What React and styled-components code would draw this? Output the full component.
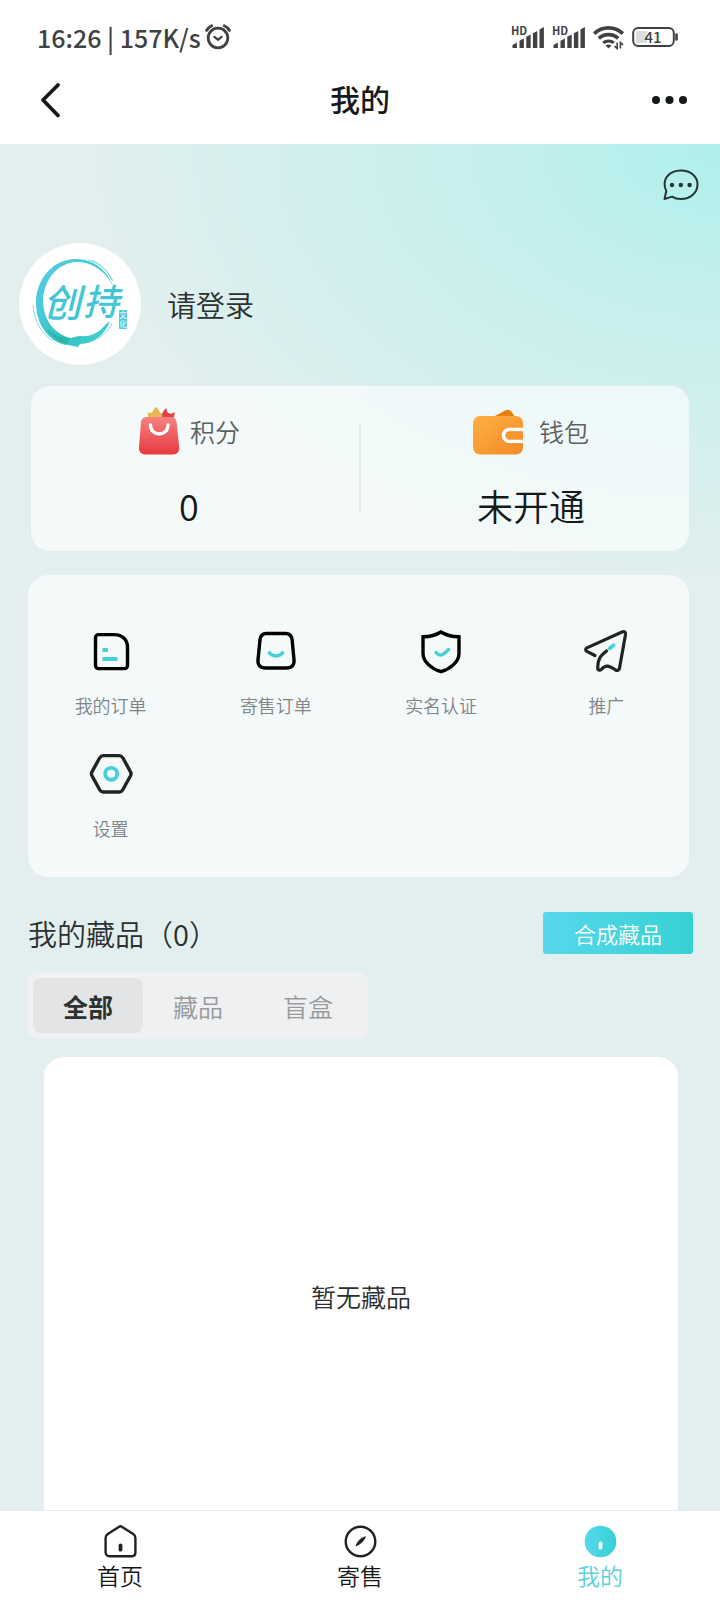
import React from 'react'
import styled, { createGlobalStyle } from 'styled-components'

const color = {
  ink: '#16191a',
  text: '#2b3030',
  status: '#404143',
  label: '#5b6060',
  muted: '#7f8587',
  accent: '#45cfd8',
  page: '#e3efef',
}

const GlobalStyle = createGlobalStyle`
  * {
    box-sizing: border-box;
  }
  body {
    margin: 0;
    font-family: 'Noto Sans CJK SC', sans-serif;
    font-weight: 350;
    color: ${color.text};
  }
  h1, h2, p {
    margin: 0;
    font-weight: inherit;
  }
  a {
    color: inherit;
    text-decoration: none;
  }
  button {
    border: none;
    padding: 0;
    background: none;
    font: inherit;
    color: inherit;
    cursor: pointer;
  }
  svg {
    display: block;
    flex: none;
    overflow: visible;
  }
`

const Screen = styled.div`
  display: flex;
  flex-direction: column;
  height: 100vh;
  background: #fff;
`

const StatusBar = styled.div`
  display: flex;
  align-items: center;
  justify-content: space-between;
  height: 56px;
  padding: 18px 42px 0 37px;
  color: ${color.status};
  font-size: 25px;
  font-weight: 500;
  line-height: 36px;
`

const StatusGroup = styled.div`
  display: flex;
  align-items: center;
  gap: ${(p) => p.$gap}px;
`

const TitleBar = styled.header`
  display: grid;
  grid-template-columns: 60px 1fr 60px;
  align-items: center;
  height: 88px;
  padding: 0 20px;
`

const BarButton = styled.button`
  display: flex;
  justify-content: center;
  padding: 16px 0;
`

const Title = styled.h1`
  padding-bottom: 5px;
  color: ${color.ink};
  font-size: 30px;
  font-weight: 500;
  line-height: 40px;
  text-align: center;
`

const Content = styled.main`
  flex: 1;
  min-height: 0;
  overflow-y: auto;
  scrollbar-width: none;
  background: radial-gradient(ellipse 650px 450px at 100% 0, #b0f0ec, #c6efed 38%, ${color.page}) no-repeat ${color.page};
`

const TopActions = styled.div`
  display: flex;
  justify-content: flex-end;
  padding: 24px 21px 0;
`

const Profile = styled.a`
  display: flex;
  align-items: center;
  gap: 26px;
  margin: 41px 19px 0;
  font-size: 29px;
`

const Avatar = styled.span`
  width: 122px;
  height: 122px;
  border-radius: 50%;
  background: #fff;
`

const Assets = styled.section`
  display: flex;
  align-items: center;
  height: 167px;
  margin: 20px 30px 0;
  border: 1px solid #e5ecec;
  border-radius: 20px;
  background: rgba(255, 255, 255, 0.62);
`

const Asset = styled.a`
  flex: 1;
  display: flex;
  flex-direction: column;
  align-items: center;
  gap: 22px;
  padding: ${(p) => (p.$last ? '0 0 2px 12px' : '0 12px 2px 0')};
`

const AssetHead = styled.span`
  display: flex;
  align-items: center;
  gap: ${(p) => p.$gap}px;
  height: 52px;
  color: ${color.label};
  font-size: 25px;
  line-height: 36px;
`

const AssetValue = styled.span`
  color: ${color.ink};
  font-size: 36px;
  line-height: 52px;
`

const Divider = styled.span`
  width: 2px;
  height: 88px;
  background: #e3e8e8;
`

const Menu = styled.nav`
  display: grid;
  grid-template-columns: repeat(4, 1fr);
  row-gap: 28px;
  margin: 23px 31px 0 28px;
  padding: 52px 0 32px;
  border-radius: 20px;
  background: rgba(255, 255, 255, 0.62);
`

const MenuItem = styled.a`
  display: flex;
  flex-direction: column;
  align-items: center;
  gap: 13px;
  color: ${color.muted};
  font-size: 18px;
  line-height: 34px;
`

const CollectionHead = styled.div`
  display: flex;
  align-items: center;
  justify-content: space-between;
  margin: 35px 27px 0 28px;
`

const CollectionTitle = styled.h2`
  font-size: 29px;
  line-height: 42px;
`

const ComposeButton = styled.button`
  width: 150px;
  height: 42px;
  border-radius: 3px;
  background: linear-gradient(90deg, #57d7ec, #36d2d3);
  color: #fff;
  font-size: 22px;
  line-height: 42px;
`

const Tabs = styled.div`
  display: flex;
  width: fit-content;
  margin: 18px 0 0 28px;
  padding: 6px 5px;
  border-radius: 10px;
  background: #eff0f2;
`

const Tab = styled.button`
  width: 110px;
  height: 55px;
  border-radius: 8px;
  background: ${(p) => (p.$active ? '#e3e4e6' : 'none')};
  color: ${(p) => (p.$active ? color.text : '#989a9c')};
  font-size: 25px;
  font-weight: ${(p) => (p.$active ? 700 : 350)};
`

const EmptyPanel = styled.section`
  display: flex;
  align-items: center;
  justify-content: center;
  height: 478px;
  margin: 18px 42px 0 44px;
  border-radius: 20px;
  background: #fff;
  font-size: 25px;
`

const TabBar = styled.nav`
  display: grid;
  grid-template-columns: repeat(3, 1fr);
  height: 90px;
  border-top: 1px solid #e6eeee;
  background: #fff;
`

const TabBarItem = styled.a`
  display: flex;
  flex-direction: column;
  align-items: center;
  padding-top: 14px;
  color: ${(p) => (p.$active ? '#5bcfe0' : color.ink)};
  font-size: 23px;
  line-height: 34px;
`

const AlarmIcon = () => (
  <svg width='26' height='26' viewBox='0 0 26 26' fill='none' stroke='currentColor' strokeWidth='2.8' strokeLinecap='round'>
    <circle cx='13' cy='14' r='9.8' />
    <path d='M1.6 6.4c1.4-2 3-3.6 5.2-4.6M24.4 6.4c-1.4-2-3-3.6-5.2-4.6' />
    <path d='M9.4 12.8l3.6 3 3.6-3' strokeWidth='2.2' />
  </svg>
)

const SignalIcon = () => (
  <svg width='33' height='24' viewBox='0 0 33 24' fill='currentColor'>
    <text x='0' y='10' fontSize='11' fontWeight='700'>HD</text>
    <path d='M1.5 20l4.4-2.6v5.6h-4.4zM8.5 15.8l4.4-2.2v9.4h-4.4zM15.3 11.8l4.4-2.2v13.4h-4.4zM21.9 8.3l4.4-2.2v16.9h-4.4zM28.5 4.6l4.4-2.6v21h-4.4z' />
  </svg>
)

const WifiIcon = () => (
  <svg width='31' height='24' viewBox='0 0 31 24' fill='none' stroke='currentColor' strokeWidth='3.6'>
    <path d='M1.2 8.6c8-7.6 20.6-7.6 28.6 0' />
    <path d='M5.8 13.4c5.4-5 14-5 19.4 0' />
    <path d='M10.2 17.9c3-2.6 7.6-2.6 10.6 0' strokeWidth='3' />
    <path d='M15.5 23.5l-3-3c1.8-1.3 4.2-1.3 6 0z' fill='currentColor' stroke='none' />
    <path d='M24.2 17.5v6l-2.6-2.4M27.4 23.5v-6l2.6 2.4' strokeWidth='1.6' />
  </svg>
)

const BatteryIcon = () => (
  <svg width='46' height='20' viewBox='0 0 46 20' fill='none'>
    <rect x='1.2' y='1' width='40.6' height='18' rx='5' stroke='currentColor' strokeWidth='2' />
    <path d='M6 4h9v12H6a2 2 0 0 1-2-2V6a2 2 0 0 1 2-2z' fill='#dcdde0' />
    <path d='M44.5 7.5v5' stroke='currentColor' strokeWidth='2.6' strokeLinecap='round' />
    <text x='21' y='15.5' textAnchor='middle' fontSize='15' fontWeight='500' fill='currentColor'>41</text>
  </svg>
)

const BackIcon = () => (
  <svg width='24' height='36' viewBox='0 0 24 36' fill='none' stroke={color.ink} strokeWidth='3.8' strokeLinecap='round' strokeLinejoin='round'>
    <path d='M20 3L5 18l15 15.5' />
  </svg>
)

const MoreIcon = () => (
  <svg width='36' height='10' viewBox='0 0 36 10' fill={color.ink}>
    <circle cx='4' cy='5' r='4' />
    <circle cx='17.5' cy='5' r='4' />
    <circle cx='31' cy='5' r='4' />
  </svg>
)

const ChatIcon = () => (
  <svg width='37' height='34' viewBox='0 0 37 34' fill='none' stroke='#273435' strokeWidth='2'>
    <path d='M2.5 31l1.8-8C-1 12 6.5 2.5 19 2.5c9.600 0 16.5 5.8 16.5 13.9S28.5 31 19 31c-3.6 0-6.6-.8-9-2.4z' strokeLinejoin='round' />
    <g fill='#273435' stroke='none'>
      <circle cx='10' cy='17' r='2.2' />
      <circle cx='18.8' cy='17' r='2.2' />
      <circle cx='27.6' cy='17' r='2.2' />
    </g>
  </svg>
)

const Logo = () => (
  <svg width='122' height='122' viewBox='0 0 122 122' role='img' aria-label='创持文化'>
    <defs>
      <linearGradient id='ring' x1='0' y1='0' x2='1' y2='1'>
        <stop offset='0' stopColor='#62c8e0' />
        <stop offset='.3' stopColor='#48cbdc' />
        <stop offset='.62' stopColor='#35c2be' />
        <stop offset='1' stopColor='#4bd3d8' />
      </linearGradient>
    </defs>
    <path
      fill='url(#ring)'
      d='M94 43C88 27 74 16 57 16C34 16 17 36 17 60C17 84 33 101 49 102L59 104L61 101C74 101 86 92 91 78L87 81C80 90 72 94 60 93L51 95C34 90 24 76 24 56C26 36 38 20 58 19C74 19 87 29 94 43Z'
    />
    <path d='M69 17C80 20 88 27 93 37M14 62C15 78 22 91 34 98M73 98C83 94 90 88 93 80M73 17C82 21 89 28 94 38' fill='none' stroke='#6ad3dc' strokeWidth='.8' />
    <path d='M30 87c7 7 15 8 21 8l-3 6c-8-2-16-7-20-14z' fill='#22ae99' opacity='.6' />
    <text x='24' y='74' fontSize='38' fontStyle='italic' fontWeight='500' fill='#42c5d5'>创</text>
    <text x='64' y='72' fontSize='36' fontStyle='italic' fontWeight='500' fill='#42c5d5'>持</text>
    <rect x='100' y='67' width='8' height='19' rx='1' fill='#55c9d6' />
    <text x='100' y='75' fontSize='8' fill='#fff'>文</text>
    <text x='100' y='84' fontSize='8' fill='#fff'>化</text>
  </svg>
)

const PointsIcon = () => (
  <svg width='42' height='50' viewBox='0 0 42 50'>
    <defs>
      <linearGradient id='bag' x1='0' y1='0' x2='0' y2='1'>
        <stop offset='0' stopColor='#f88180' />
        <stop offset='1' stopColor='#e63a40' />
      </linearGradient>
    </defs>
    <path d='M10.5 13L9.500 6c2 1.6 4.3 1.4 5-.4C15.7 4 16 2.4 17.5 1c3 1.6 3.2 4 4.5 5.6.8.8 2 .6 3-.2L25 13z' fill='#eab654' />
    <path d='M24 11c0-4 1.4-7 4.6-9-.2 3 .6 5 3 5.4 2 .4 3.6-.2 5.4-1.4L35.4 13H24z' fill='#e2414a' />
    <path d='M9 11h24c3 0 5.2 1.6 5.6 5l2.6 25c.5 4.5-2 7.4-6.4 7.4H7.6C3 48.4.5 45.500 1 41l2-25c.3-3.3 2.8-5 6-5z' fill='url(#bag)' />
    <path d='M12.5 20c0 12 17.5 12 17.5 0' fill='none' stroke='#c93138' strokeWidth='3.4' strokeLinecap='round' opacity='.3' />
    <path d='M12.5 19c0 12 17.5 12 17.5 0' fill='none' stroke='#fff' strokeWidth='3.4' strokeLinecap='round' />
  </svg>
)

const WalletIcon = () => (
  <svg width='52' height='50' viewBox='0 0 52 50'>
    <defs>
      <linearGradient id='wallet' x1='0' y1='0' x2='1' y2='1'>
        <stop offset='0' stopColor='#feb045' />
        <stop offset='1' stopColor='#f38a26' />
      </linearGradient>
    </defs>
    <path d='M20 11L32.500 4.200c2.600-1.200 5-.4 6.500 2L42.500 12H20z' fill='#e4820f' />
    <rect x='0' y='10' width='50' height='38.5' rx='7' fill='url(#wallet)' />
    <path d='M50 24.5H36.5a6 6 0 0 0 0 12H50' fill='none' stroke='#cf6a10' strokeWidth='3.6' opacity='.4' />
    <path d='M50 23.5H36.5a6 6 0 0 0 0 12H50' fill='none' stroke='#fff' strokeWidth='3.6' />
  </svg>
)

const MenuSvg = ({ children }) => (
  <svg width='48' height='48' viewBox='0 0 48 48' fill='none' stroke='#000' strokeWidth='3.4' strokeLinecap='round' strokeLinejoin='round'>
    {children}
  </svg>
)

const menu = [
  {
    label: '我的订单',
    icon: (
      <>
        <path d='M11 7.6h16.5c7.5 0 13 5 13 12.5v18.5a3 3 0 0 1-3 3H11.500a3 3 0 0 1-3-3V10.6a3 3 0 0 1 3-3z' />
        <path d='M15.500 23h5.5M15.500 32h15' stroke={color.accent} strokeWidth='3.8' strokeLinecap='butt' />
      </>
    ),
  },
  {
    label: '寄售订单',
    icon: (
      <>
        <path d='M14.5 6.500h19c4 0 6.200 2.200 6.600 6.200l1.900 20c.5 5.400-2.200 8.300-7.500 8.300H13.500C8.200 41 5.500 38 6 33l2-20.300c.4-4 2.500-6.200 6.500-6.200z' />
        <path d='M16.5 24.800c4.400 5.600 10.600 5.600 15 0' stroke={color.accent} strokeLinecap='butt' />
      </>
    ),
  },
  {
    label: '实名认证',
    icon: (
      <>
        <path d='M24 5c5 3.2 11 4.6 18 4.8v16.600c0 8.2-8.6 15.6-18 18.3C14.6 42 6 34.6 6 26.4V9.8C13 9.6 19 8.2 24 5z' strokeLinejoin='miter' />
        <path d='M19 25.5c3.5 4.3 6.5 3.3 12.5-3' stroke={color.accent} />
      </>
    ),
  },
  {
    label: '推广',
    icon: (
      <g stroke='#202425' strokeWidth='3.2'>
        <path d='M13 28.5L4.8 24.3c-1.6-1-1.5-2.6.1-3.4L40 5c2.6-.9 3.8.3 3.5 2.5l-6 33.8c-.4 2-2.2 2.7-3.9 1.7-7-5-10.5-5-13.8-.9-1.4 1.900-4.2 1.2-4.1-1.3C16 32 18 29 24.5 24' />
        <path d='M27.5 21.5l4.2-3.3' stroke={color.accent} strokeWidth='3.6' />
      </g>
    ),
  },
  {
    label: '设置',
    icon: (
      <g stroke='#202425'>
        <path d='M16.5 5.6h15.5c1.7 0 2.9.8 3.8 2.2l7.6 13.8c.9 1.5.9 2.9 0 4.4l-7.6 13.8c-.9 1.4-2.1 2.2-3.8 2.2H16.5c-1.7 0-2.9-.8-3.8-2.2L5.1 26c-.9-1.5-.9-2.9 0-4.4l7.6-13.8c.9-1.4 2.1-2.2 3.8-2.2z' />
        <circle cx='24.2' cy='23.8' r='6' stroke={color.accent} strokeWidth='3.8' />
      </g>
    ),
  },
]

const HomeIcon = () => (
  <svg width='33' height='33' viewBox='0 0 33 33' fill='none' stroke='#1f2324' strokeWidth='2.4' strokeLinejoin='round'>
    <path d='M14.8 1.9c1.2-.8 2.3-.8 3.4 0l11 7.2c1.5 1 2.2 2.3 2.2 4v14.2c0 2.5-1.5 4-4 4H5.6c-2.5 0-4-1.5-4-4V13.1c0-1.7.7-3 2.2-4z' />
    <path d='M16.5 20.5v4.2' strokeWidth='3.8' strokeLinecap='round' />
  </svg>
)

const CompassIcon = () => (
  <svg width='33' height='33' viewBox='0 0 33 33'>
    <circle cx='16.5' cy='16.5' r='14.8' fill='none' stroke='#1f2324' strokeWidth='2.4' />
    <path d='M22 11.3c-5 1.2-8.7 4.4-10.7 10.4 5-2 9-5.2 10.7-10.4z' fill='#1f2324' />
  </svg>
)

const MineIcon = () => (
  <svg width='33' height='33' viewBox='0 0 33 33'>
    <defs>
      <linearGradient id='mine' x1='0' y1='0' x2='1' y2='0'>
        <stop offset='0' stopColor='#57d7ec' />
        <stop offset='1' stopColor='#36d2d3' />
      </linearGradient>
    </defs>
    <circle cx='16.5' cy='16.5' r='15.8' fill='url(#mine)' />
    <path d='M16.5 18.3v4.4' stroke='#fff' strokeWidth='3.8' strokeLinecap='round' />
  </svg>
)

const tabs = ['全部', '藏品', '盲盒']

export default () => {
  const [tab, setTab] = React.useState(tabs[0])

  return (
    <Screen>
      <GlobalStyle />
      <StatusBar>
        <StatusGroup $gap={4}>
          16:26 | 157K/s
          <AlarmIcon />
        </StatusGroup>
        <StatusGroup $gap={8}>
          <SignalIcon />
          <SignalIcon />
          <WifiIcon />
          <BatteryIcon />
        </StatusGroup>
      </StatusBar>
      <TitleBar>
        <BarButton aria-label='返回'>
          <BackIcon />
        </BarButton>
        <Title>我的</Title>
        <BarButton aria-label='更多'>
          <MoreIcon />
        </BarButton>
      </TitleBar>

      <Content>
        <TopActions>
          <button aria-label='消息'>
            <ChatIcon />
          </button>
        </TopActions>
        <Profile href='#login'>
          <Avatar>
            <Logo />
          </Avatar>
          请登录
        </Profile>

        <Assets>
          <Asset href='#points'>
            <AssetHead $gap={10}>
              <PointsIcon />
              积分
            </AssetHead>
            <AssetValue>0</AssetValue>
          </Asset>
          <Divider />
          <Asset href='#wallet' $last>
            <AssetHead $gap={14}>
              <WalletIcon />
              钱包
            </AssetHead>
            <AssetValue>未开通</AssetValue>
          </Asset>
        </Assets>

        <Menu>
          {menu.map(({ label, icon }) => (
            <MenuItem key={label} href='#menu'>
              <MenuSvg>{icon}</MenuSvg>
              {label}
            </MenuItem>
          ))}
        </Menu>

        <CollectionHead>
          <CollectionTitle>我的藏品（0）</CollectionTitle>
          <ComposeButton>合成藏品</ComposeButton>
        </CollectionHead>
        <Tabs>
          {tabs.map((name) => (
            <Tab key={name} $active={name === tab} onClick={() => setTab(name)}>
              {name}
            </Tab>
          ))}
        </Tabs>
        <EmptyPanel>
          <p>暂无藏品</p>
        </EmptyPanel>
      </Content>

      <TabBar>
        <TabBarItem href='#home'>
          <HomeIcon />
          首页
        </TabBarItem>
        <TabBarItem href='#consign'>
          <CompassIcon />
          寄售
        </TabBarItem>
        <TabBarItem href='#mine' $active>
          <MineIcon />
          我的
        </TabBarItem>
      </TabBar>
    </Screen>
  )
}
